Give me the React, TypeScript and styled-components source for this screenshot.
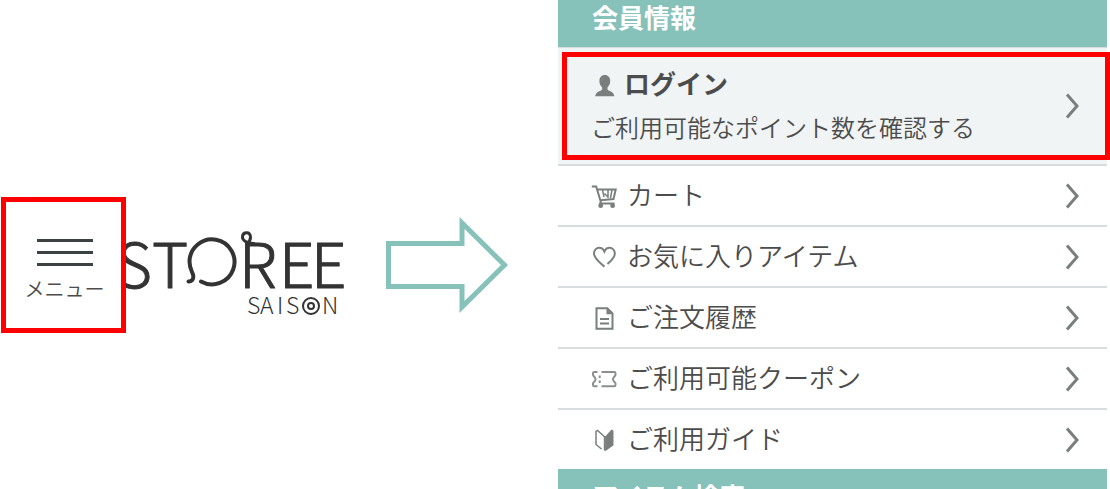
import React from "react";
import styled, { createGlobalStyle } from "styled-components";

const GlobalStyle = createGlobalStyle`
  *, *::before, *::after { box-sizing: border-box; }
  body {
    margin: 0;
    background: #fff;
    color: #4c4c4c;
    font-family: "Noto Sans CJK JP", sans-serif;
    font-weight: 350;
  }
`;

const Page = styled.main`
  display: grid;
  grid-template-columns: minmax(0, 93fr) minmax(0, 92fr);
  height: 100vh;
  overflow: hidden;
`;

const Start = styled.section`
  display: flex;
  align-items: center;
  align-self: start;
  padding: 197px 0 0 1px;
`;

const MenuButton = styled.button`
  display: flex;
  flex: 0 0 125px;
  flex-direction: column;
  align-items: center;
  gap: 6px;
  padding: 37px 0 23px;
  border: 5px solid #f00;
  background: #fff;
  color: #4c4c4c;
  font: inherit;
  font-size: 20px;
  line-height: 32px;
`;

const Bars = styled.span`
  display: flex;
  flex-direction: column;
  gap: 9px;
  width: 56px;
  margin-left: 2px;
`;

const Bar = styled.span`
  height: 3px;
  background: #3c4141;
`;

const MenuLabel = styled.span`
  padding: 1px 0 0 2px;
`;

const Logo = styled.svg`
  flex: 0 0 218px;
  height: 120px;
  font-family: "Noto Sans CJK JP", sans-serif;
  font-weight: 300;
  fill: #333;
`;

const Arrow = styled.svg`
  flex: 0 0 124px;
  height: 100px;
  margin-left: 42px;
`;

const Panel = styled.nav`
  margin: -10px 3px 0 0;
`;

const Heading = styled.h2`
  height: 57px;
  margin: 0;
  padding: 9px 34px;
  background: #86c1ba;
  color: #fff;
  font-size: 26px;
  font-weight: 700;
  line-height: 36px;
`;

const List = styled.ul`
  margin: 0;
  padding: 0;
  list-style: none;
`;

const Item = styled.li`
  border-bottom: 2px solid #d6dddc;

  &:last-child { border-bottom: 0; }
`;

const Row = styled.a`
  display: flex;
  align-items: center;
  gap: 10px;
  height: 59px;
  padding: 0 28px 0 33px;
  color: inherit;
  font-size: 26px;
  line-height: 36px;
  text-decoration: none;
`;

const LoginItem = styled.li`
  position: relative;
  border-top: 1px solid #d6dddc;
  border-bottom: 2px solid #d6dddc;
  background: #f0f4f5;

  &::after {
    content: "";
    position: absolute;
    inset: 4px -3px 4px 4px;
    border: 5px solid #f00;
    pointer-events: none;
  }
`;

const LoginLink = styled.a`
  display: flex;
  align-items: center;
  height: 116px;
  padding: 0 28px 0 33px;
  color: inherit;
  text-decoration: none;
`;

const LoginText = styled.span`
  display: flex;
  flex: 1;
  flex-direction: column;
  gap: 4px;
  padding-bottom: 2px;
`;

const LoginTitle = styled.strong`
  display: flex;
  align-items: center;
  gap: 7px;
  font-size: 26px;
  font-weight: 700;
  line-height: 36px;
`;

const LoginNote = styled.span`
  font-size: 24px;
  line-height: 36px;
`;

const Label = styled.span`
  flex: 1;
  padding-bottom: 4px;
`;

const Icon = styled.svg`
  flex: 0 0 26px;
  height: 26px;
  fill: none;
  stroke: #7a7e7d;
  stroke-width: 2;
`;

const ChevronSvg = styled.svg`
  flex: 0 0 14px;
  height: 26px;
  fill: none;
  stroke: #7a7e7d;
  stroke-width: 3;
`;

const Chevron = () => (
  <ChevronSvg viewBox="0 0 14 26" aria-hidden="true">
    <path d="M2 1.500 12 13 2 24.500" />
  </ChevronSvg>
);

const PersonIcon = () => (
  <Icon viewBox="0 0 26 26" aria-hidden="true">
    <path
      d="M13.800 3c-3.300 0-5.400 2.400-5.400 6 0 2.700 1 4.900 2.700 6.200v2.300c-.3 1.800-6.500 1.400-6.800 6.800h19c-.3-5.400-6.500-5-6.800-6.800v-2.300c1.700-1.300 2.700-3.500 2.700-6.200 0-3.600-2.100-6-5.400-6z"
      fill="#7a7e7d"
      stroke="none"
    />
  </Icon>
);

const CartIcon = () => (
  <Icon viewBox="0 0 26 26" aria-hidden="true">
    <path d="M.8 3.500h4.400L10 19.500M6.300 6.500h18.400l-2.200 9.500-13.200 1.200M8 20.500h15.500" />
    <path d="M11.500 7l1.500 7M17 7v8M13.500 10.500l3 3M21 7l-1.500 8" strokeWidth="1.500" />
    <circle cx="9.700" cy="22.700" r="2.400" fill="#7a7e7d" stroke="none" />
    <circle cx="21.600" cy="22.700" r="2.400" fill="#7a7e7d" stroke="none" />
  </Icon>
);

const HeartIcon = () => (
  <Icon viewBox="0 0 26 26" aria-hidden="true">
    <path d="M13.400 22.800C9 18.500 3 14.500 3 9.500c0-3.300 2.400-5.700 5.200-5.700 2.600 0 4.200 1.500 5.200 3.700 1-2.200 2.600-3.700 5.200-3.700 2.800 0 5.200 2.400 5.200 5.700 0 4.500-3.600 7-7.300 10.500" />
  </Icon>
);

const DocumentIcon = () => (
  <Icon viewBox="0 0 26 26" aria-hidden="true">
    <path d="M5.500 3.200h10.800l5.200 5.200v15.300h-16zM9 14h9M9 18.500h9" />
    <path d="M15.500 3v6.200h6z" fill="#7a7e7d" stroke="none" />
  </Icon>
);

const TicketIcon = () => (
  <Icon viewBox="0 0 26 26" aria-hidden="true">
    <path
      d="M6.500 6H3.300Q2 6 2 7.300v1.500c0 1.500 2.500 2 2.500 4.400S2 16.100 2 17.600v1.300q0 1.300 1.300 1.300h3.200M10.500 6h12.700q1.300 0 1.300 1.300v1.500c0 1.500-2.500 2-2.500 4.400s2.500 2.900 2.500 4.400v1.300q0 1.300-1.300 1.300H10.500M8.700 9.500v2.500M8.700 14.500v2.500"
      stroke="#8b8f8e"
    />
  </Icon>
);

const GuideIcon = () => (
  <Icon viewBox="0 0 26 26" aria-hidden="true">
    <path d="M13.300 9.500 6.500 3.500 5 4.500v13l5.500 4.500" strokeWidth="1.500" />
    <path d="M14.300 9.500 20.500 2.500l2 1.200v14.500l-8.200 6z" fill="#7a7e7d" stroke="none" />
    <path d="M13.800 9v14.500" />
  </Icon>
);

const menu = [
  { label: "カート", icon: <CartIcon /> },
  { label: "お気に入りアイテム", icon: <HeartIcon /> },
  { label: "ご注文履歴", icon: <DocumentIcon /> },
  { label: "ご利用可能クーポン", icon: <TicketIcon /> },
  { label: "ご利用ガイド", icon: <GuideIcon /> },
];

export default function App() {
  return (
    <>
      <GlobalStyle />
      <Page>
        <Start>
          <MenuButton type="button">
            <Bars>
              <Bar />
              <Bar />
              <Bar />
            </Bars>
            <MenuLabel>メニュー</MenuLabel>
          </MenuButton>
          <Logo viewBox="126 205 218 120" role="img" aria-label="STOREE SAISON">
            <g stroke="#333" strokeWidth="1" strokeLinejoin="round">
              <text x="116 152" y="288" fontSize="62">ST</text>
              <text x="239 279 311" y="288" fontSize="62">REE</text>
            </g>
            <g fill="none" stroke="#333" strokeWidth="4" strokeLinecap="round">
              <path d="M188.500 281.500c4 0 5.500-3 4.500-7-1.500-4-3.500-7-3.500-13a22.500 22.500 0 1 1 11.500 20" />
              <path d="M254 243.500c-7 0-12-3-11.500-7 .5-4.500 7.500-5.500 8 .5 .2 3-1.500 5-3.500 7" strokeWidth="3" />
            </g>
            <text x="247 260 277 286 322" y="314" fontSize="23">SAISN</text>
            <g fill="none" stroke="#333" strokeWidth="2">
              <circle cx="311" cy="306" r="8" />
              <circle cx="311" cy="306" r="3" />
            </g>
          </Logo>
          <Arrow viewBox="386 215 124 100" aria-hidden="true">
            <path
              d="M388.500 243.500H462V223L504.500 265 462 307V286.500H388.500z"
              fill="#fff"
              stroke="#86c1ba"
              strokeWidth="5"
            />
          </Arrow>
        </Start>
        <Panel aria-label="会員メニュー">
          <Heading>会員情報</Heading>
          <List>
            <LoginItem>
              <LoginLink href="#login">
                <LoginText>
                  <LoginTitle>
                    <PersonIcon />
                    <Label>ログイン</Label>
                  </LoginTitle>
                  <LoginNote>ご利用可能なポイント数を確認する</LoginNote>
                </LoginText>
                <Chevron />
              </LoginLink>
            </LoginItem>
            {menu.map(({ label, icon }) => (
              <Item key={label}>
                <Row href="#menu">
                  {icon}
                  <Label>{label}</Label>
                  <Chevron />
                </Row>
              </Item>
            ))}
          </List>
          <Heading>アイテム検索</Heading>
        </Panel>
      </Page>
    </>
  );
}
